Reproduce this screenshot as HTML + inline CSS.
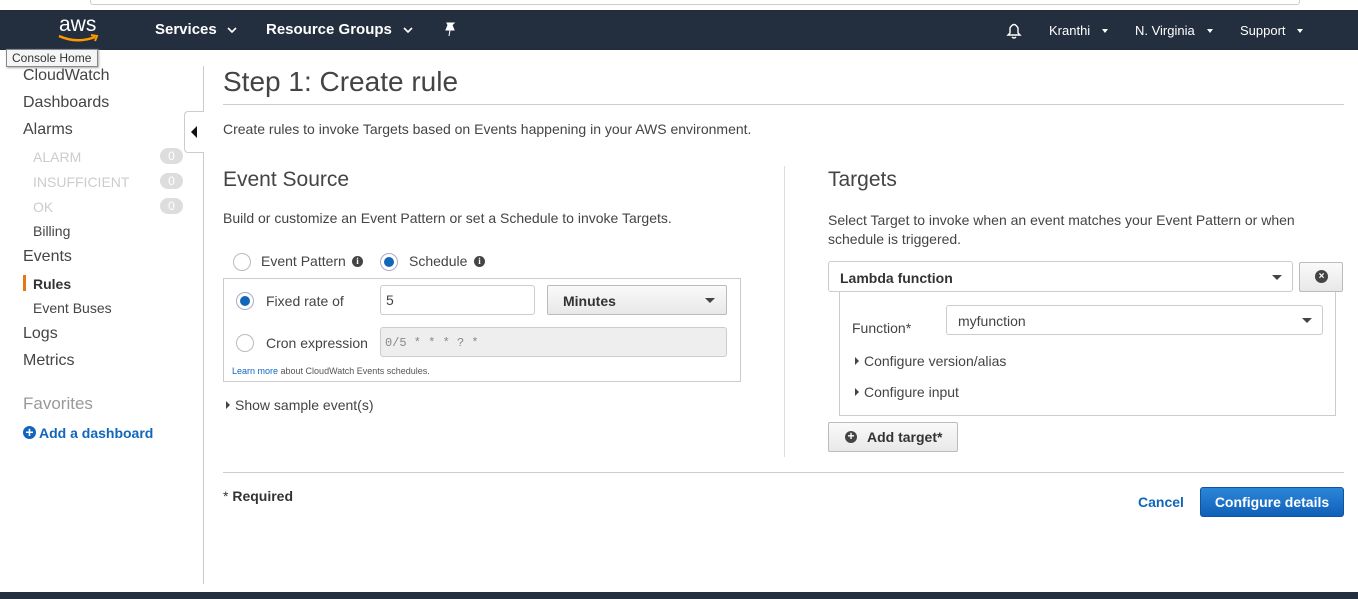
<!DOCTYPE html>
<html><head><style>
*{box-sizing:border-box;margin:0;padding:0}
body{width:1358px;height:599px;position:relative;overflow:hidden;background:#fff;font-family:"Liberation Sans",Arial,sans-serif;color:#444}
.a{position:absolute;white-space:nowrap}
.nav{left:0;top:10px;width:1358px;height:40px;background:#232f3e}
.nw{color:#fff;font-weight:bold;font-size:15px}
.nr{color:#fff;font-size:13px}
.side{font-size:16px;color:#444}
.sub{font-size:14px;color:#444}
.dim{color:#ccc;font-size:14px}
.badge{width:23px;height:16px;border-radius:8px;background:#ddd;color:#fff;font-size:12px;text-align:center;line-height:16px}
.radio{width:18px;height:18px;border-radius:50%;border:1px solid #bbb;background:#fff}
.radio.on{border-color:#aac;}
.radio.on::after{content:"";position:absolute;left:3px;top:3px;width:10px;height:10px;border-radius:50%;background:#1166bb}
.info{width:11px;height:11px;border-radius:50%;background:#444;color:#fff;font-size:9px;font-weight:bold;text-align:center;line-height:11px;font-family:"Liberation Serif",serif}
.btn{border:1px solid #bbb;border-radius:2px;background:linear-gradient(#fafafa,#e8e8e8)}
.tri{width:0;height:0;border-left:5px solid transparent;border-right:5px solid transparent;border-top:5px solid #444}
.rt{width:0;height:0;border-top:4px solid transparent;border-bottom:4px solid transparent;border-left:4px solid #444}
</style></head><body>
<div class="a" style="left:90px;top:-2px;width:1210px;height:7px;border:1px solid #ccc;border-radius:0 0 3px 3px"></div>
<div class="a nav"></div>
<div class="a" style="left:59px;top:13px;color:#fff;font-size:21px;">aws</div>
<svg class="a" style="left:57px;top:34px" width="44" height="10"><path d="M2 2 Q20 10 38 3" stroke="#f90" stroke-width="2.5" fill="none"/><path d="M34 1 L40 2 L38 7" stroke="#f90" stroke-width="2" fill="none"/></svg>
<div class="a nw" style="left:155px;top:21px">Services</div>
<div class="a nw" style="left:266px;top:21px">Resource Groups</div>
<svg class="a" style="left:227px;top:27px" width="10" height="7"><path d="M1 1 L5 5 L9 1" stroke="#fff" stroke-width="1.6" fill="none"/></svg>
<svg class="a" style="left:403px;top:27px" width="10" height="7"><path d="M1 1 L5 5 L9 1" stroke="#fff" stroke-width="1.6" fill="none"/></svg>
<svg class="a" style="left:443px;top:22px" width="14" height="16"><path d="M4 1 L11 1 L9 3 L11 8 L3 8 L5 3 Z M7 8 L6 14" stroke="#fff" fill="#fff"/></svg>
<svg class="a" style="left:1005px;top:21px" width="18" height="20"><path d="M3 14 L5 12 L5 7 Q9 0 13 7 L13 12 L15 14 Z M7 16 Q9 18 11 16" stroke="#fff" stroke-width="1.4" fill="none"/></svg>
<div class="a nr" style="left:1049px;top:23px">Kranthi</div>
<div class="a nr" style="left:1135px;top:23px">N. Virginia</div>
<div class="a nr" style="left:1240px;top:23px">Support</div>
<div class="a tri" style="left:1102px;top:29px;border-width:4px 3px 0 3px;border-top-color:#fff"></div>
<div class="a tri" style="left:1207px;top:29px;border-width:4px 3px 0 3px;border-top-color:#fff"></div>
<div class="a tri" style="left:1297px;top:29px;border-width:4px 3px 0 3px;border-top-color:#fff"></div>
<div class="a" style="left:6px;top:49px;width:92px;height:18px;border:1px solid #888;background:#f5f5f5;font-size:12px;color:#333;padding:1px 5px;box-shadow:1px 1px 2px #aaa">Console Home</div>

<div class="a side" style="left:23px;top:67px">CloudWatch</div>
<div class="a side" style="left:23px;top:94px">Dashboards</div>
<div class="a side" style="left:23px;top:121px">Alarms</div>
<div class="a dim" style="left:33px;top:149px">ALARM</div>
<div class="a dim" style="left:33px;top:174px">INSUFFICIENT</div>
<div class="a dim" style="left:33px;top:199px">OK</div>
<div class="a badge" style="left:160px;top:148px">0</div>
<div class="a badge" style="left:160px;top:173px">0</div>
<div class="a badge" style="left:160px;top:198px">0</div>
<div class="a sub" style="left:33px;top:223px">Billing</div>
<div class="a side" style="left:23px;top:248px">Events</div>
<div class="a" style="left:23px;top:275px;width:3px;height:16px;background:#e47911"></div>
<div class="a sub" style="left:33px;top:276px;font-weight:bold;color:#333">Rules</div>
<div class="a sub" style="left:33px;top:300px">Event Buses</div>
<div class="a side" style="left:23px;top:325px">Logs</div>
<div class="a side" style="left:23px;top:352px">Metrics</div>
<div class="a side" style="left:23px;top:394px;color:#999;font-size:17px">Favorites</div>
<div class="a" style="left:23px;top:426px;width:13px;height:13px;border-radius:50%;background:#1166bb;color:#fff;font-size:14px;font-weight:bold;line-height:12px;text-align:center">+</div>
<div class="a" style="left:39px;top:425px;font-size:14px;font-weight:bold;color:#1166bb">Add a dashboard</div>
<div class="a" style="left:203px;top:66px;width:1px;height:518px;background:#ccc"></div>
<div class="a" style="left:184px;top:111px;width:20px;height:42px;border:1px solid #ccc;border-right:none;border-radius:4px 0 0 4px;background:#fff"></div>
<div class="a" style="left:191px;top:126px;border-top:6px solid transparent;border-bottom:6px solid transparent;border-right:6px solid #111"></div>

<div class="a" style="left:223px;top:66px;font-size:28px;color:#444">Step 1: Create rule</div>
<div class="a" style="left:223px;top:104px;width:1121px;height:1px;background:#ccc"></div>
<div class="a" style="left:223px;top:121px;font-size:14px">Create rules to invoke Targets based on Events happening in your AWS environment.</div>

<div class="a" style="left:223px;top:168px;font-size:21px">Event Source</div>
<div class="a" style="left:223px;top:210px;font-size:14px">Build or customize an Event Pattern or set a Schedule to invoke Targets.</div>
<div class="a radio" style="left:233px;top:253px"></div>
<div class="a" style="left:261px;top:253px;font-size:14px">Event Pattern</div>
<div class="a info" style="left:352px;top:256px">i</div>
<div class="a radio on" style="left:380px;top:253px"></div>
<div class="a" style="left:409px;top:253px;font-size:14px">Schedule</div>
<div class="a info" style="left:474px;top:256px">i</div>
<div class="a" style="left:223px;top:278px;width:518px;height:104px;border:1px solid #ccc"></div>
<div class="a radio on" style="left:236px;top:292px"></div>
<div class="a" style="left:266px;top:293px;font-size:14px">Fixed rate of</div>
<div class="a" style="left:380px;top:285px;width:155px;height:30px;border:1px solid #ccc;border-radius:3px;font-size:14px;padding:6px 5px">5</div>
<div class="a btn" style="left:547px;top:285px;width:180px;height:30px;font-size:14px;font-weight:bold;padding:7px 15px;color:#333">Minutes</div>
<div class="a tri" style="left:705px;top:298px"></div>
<div class="a radio" style="left:236px;top:334px"></div>
<div class="a" style="left:266px;top:335px;font-size:14px">Cron expression</div>
<div class="a" style="left:380px;top:327px;width:347px;height:30px;border:1px solid #ccc;border-radius:3px;background:#eee;font-family:'Liberation Mono',monospace;font-size:12px;color:#888;padding:8px 4px">0/5 * * * ? *</div>
<div class="a" style="left:232px;top:366px;font-size:9px;color:#555"><span style="color:#1166bb">Learn more</span> about CloudWatch Events schedules.</div>
<div class="a rt" style="left:226px;top:401px"></div>
<div class="a" style="left:235px;top:397px;font-size:14px">Show sample event(s)</div>

<div class="a" style="left:784px;top:166px;width:1px;height:291px;background:#ddd"></div>

<div class="a" style="left:828px;top:168px;font-size:21px">Targets</div>
<div class="a" style="left:828px;top:211px;font-size:14px;line-height:19px;white-space:normal;width:500px">Select Target to invoke when an event matches your Event Pattern or when schedule is triggered.</div>
<div class="a" style="left:828px;top:261px;width:465px;height:31px;border:1px solid #ccc;border-radius:3px;font-size:14px;font-weight:bold;color:#333;padding:8px 11px">Lambda function</div>
<div class="a tri" style="left:1272px;top:275px"></div>
<div class="a btn" style="left:1299px;top:262px;width:44px;height:30px"></div>
<div class="a" style="left:1315px;top:270px;width:13px;height:13px;border-radius:50%;background:#444;color:#fff;font-size:10px;font-weight:bold;line-height:13px;text-align:center">×</div>
<div class="a" style="left:839px;top:292px;width:497px;height:124px;border:1px solid #ccc;border-top:none"></div>
<div class="a" style="left:852px;top:320px;font-size:14px">Function*</div>
<div class="a" style="left:946px;top:305px;width:377px;height:30px;border:1px solid #ccc;border-radius:3px;font-size:14px;padding:7px 11px">myfunction</div>
<div class="a tri" style="left:1302px;top:318px"></div>
<div class="a rt" style="left:855px;top:357px"></div>
<div class="a" style="left:864px;top:353px;font-size:14px">Configure version/alias</div>
<div class="a rt" style="left:855px;top:388px"></div>
<div class="a" style="left:864px;top:384px;font-size:14px">Configure input</div>
<div class="a btn" style="left:828px;top:422px;width:130px;height:30px"></div>
<div class="a" style="left:845px;top:431px;width:12px;height:12px;border-radius:50%;background:#444;color:#fff;font-size:12px;font-weight:bold;line-height:11px;text-align:center">+</div>
<div class="a" style="left:867px;top:429px;font-size:14px;font-weight:bold;color:#333">Add target*</div>

<div class="a" style="left:223px;top:472px;width:1121px;height:1px;background:#ccc"></div>
<div class="a" style="left:223px;top:488px;font-size:14px;font-weight:bold;color:#333"><span style="font-weight:normal">*</span> Required</div>
<div class="a" style="left:1138px;top:494px;font-size:14px;font-weight:bold;color:#1166bb">Cancel</div>
<div class="a" style="left:1200px;top:487px;width:144px;height:30px;border-radius:3px;background:linear-gradient(#2b86d8,#1060b8);border:1px solid #1055a5;color:#fff;font-size:14px;font-weight:bold;text-align:center;line-height:28px">Configure details</div>
<div class="a" style="left:0;top:592px;width:1358px;height:7px;background:#232f3e"></div>
</body></html>
